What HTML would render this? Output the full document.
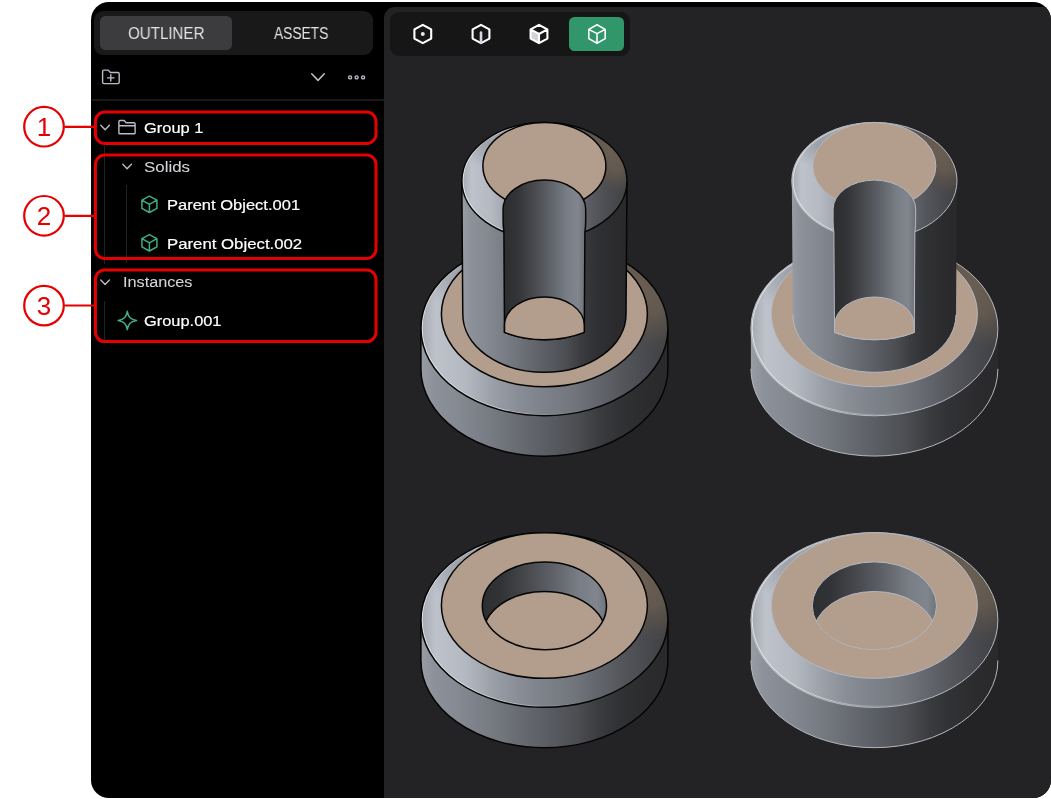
<!DOCTYPE html>
<html lang="en">
<head>
<meta charset="utf-8">
<title>Outliner</title>
<style>
html,body{margin:0;padding:0;background:#fff;}
body{width:1051px;height:799px;position:relative;overflow:hidden;font-family:"Liberation Sans",sans-serif;}
.app{position:absolute;left:91px;top:2px;width:959.5px;height:795.5px;background:#000;border-radius:18px;overflow:hidden;}
.view{position:absolute;left:293px;top:4.5px;right:0;bottom:0;background:#232325;border-top-left-radius:11px;}
.tbar{position:absolute;left:390px;top:12px;width:239.5px;height:43.5px;background:#161617;border-radius:9px;}
.tbtn{position:absolute;left:569px;top:17.2px;width:55.2px;height:33.6px;background:#32966b;border-radius:5.5px;}
.tabs{position:absolute;left:93.5px;top:11px;width:279.5px;height:44px;background:#19191a;border-radius:9px;}
.tabon{position:absolute;left:99.5px;top:16.4px;width:132.5px;height:33.6px;background:#3c3c3f;border-radius:5.5px;}
.tab{position:absolute;top:24px;height:20px;line-height:20px;font-size:17px;color:#e4e4e8;white-space:nowrap;transform-origin:0 50%;}
.sep{position:absolute;left:92px;top:99px;width:292px;height:1.5px;background:#19191a;}
.row{position:absolute;height:22px;line-height:22px;font-size:15.5px;color:#fff;white-space:nowrap;transform-origin:0 50%;}
.row{-webkit-text-stroke:0.2px #fff;}
.dim{color:#d4d4d8;-webkit-text-stroke:0.08px #d4d4d8;}
.row,.tab{will-change:transform;}
.guide{position:absolute;width:1px;background:#222224;}
svg.vp,svg.ov{position:absolute;left:0;top:0;}
.num{font-family:"Liberation Sans",sans-serif;font-size:26px;fill:#e60000;}
</style>
</head>
<body>
<div class="app"><div class="view"></div></div>
<div class="tbar"></div><div class="tbtn"></div>
<div class="tabs"></div><div class="tabon"></div>
<div class="tab" id="t1" style="left:128.2px;transform:scaleX(0.889);">OUTLINER</div>
<div class="tab" id="t2" style="left:274px;transform:scaleX(0.81);">ASSETS</div>
<div class="sep"></div>
<div class="guide" style="left:104px;top:146px;height:118px;"></div>
<div class="guide" style="left:126px;top:185px;height:78px;"></div>
<div class="guide" style="left:104px;top:301px;height:40px;"></div>
<div class="row" id="r1" style="left:143.9px;transform:scaleX(1.06);top:117px;">Group 1</div>
<div class="row dim" id="r2" style="left:144.0px;transform:scaleX(1.09);top:155.5px;">Solids</div>
<div class="row" id="r3" style="left:166.6px;transform:scaleX(1.065);top:194px;">Parent Object.001</div>
<div class="row" id="r4" style="left:166.6px;transform:scaleX(1.082);top:232.5px;">Parent Object.002</div>
<div class="row dim" id="r5" style="left:122.6px;transform:scaleX(1.047);top:271.4px;">Instances</div>
<div class="row" id="r6" style="left:143.9px;transform:scaleX(1.058);top:310px;">Group.001</div>
<svg class="vp" width="1051" height="799" viewBox="0 0 1051 799">
<defs>
<linearGradient id="g1" gradientUnits="userSpaceOnUse" x1="420.9" y1="0" x2="667.9" y2="0"><stop offset="0" stop-color="#989ca4"/><stop offset="0.05" stop-color="#8d9199"/><stop offset="0.15" stop-color="#858991"/><stop offset="0.26" stop-color="#797d85"/><stop offset="0.38" stop-color="#6a6e74"/><stop offset="0.5" stop-color="#5b5e64"/><stop offset="0.63" stop-color="#4c4e52"/><stop offset="0.72" stop-color="#3b3c3f"/><stop offset="0.8" stop-color="#313235"/><stop offset="0.9" stop-color="#2c2c2e"/><stop offset="1" stop-color="#29292b"/></linearGradient>
<linearGradient id="g2" gradientUnits="userSpaceOnUse" x1="420.9" y1="0" x2="667.9" y2="0"><stop offset="0" stop-color="#a4a8b0"/><stop offset="0.06" stop-color="#bec2ca"/><stop offset="0.18" stop-color="#b4b8c0"/><stop offset="0.3" stop-color="#999da5"/><stop offset="0.4" stop-color="#888c94"/><stop offset="0.5" stop-color="#7d8189"/><stop offset="0.62" stop-color="#72767c"/><stop offset="0.72" stop-color="#62656b"/><stop offset="0.82" stop-color="#53555a"/><stop offset="0.92" stop-color="#48494e"/><stop offset="1" stop-color="#3f4043"/></linearGradient>
<radialGradient id="g3" gradientUnits="userSpaceOnUse" cx="0" cy="0" r="1" gradientTransform="translate(467.83 274.26) rotate(0) scale(55.58 34.93)"><stop offset="0" stop-color="#80848c" stop-opacity="0.55"/><stop offset="1" stop-color="#80848c" stop-opacity="0"/></radialGradient>
<radialGradient id="g4" gradientUnits="userSpaceOnUse" cx="0" cy="0" r="1" gradientTransform="translate(643.2 288.23) rotate(-28) scale(46.93 69.86)"><stop offset="0" stop-color="#6a5e52" stop-opacity="1"/><stop offset="0.4" stop-color="#655a4f" stop-opacity="0.92"/><stop offset="0.7" stop-color="#5a524a" stop-opacity="0.55"/><stop offset="1" stop-color="#4a4744" stop-opacity="0"/></radialGradient>
<linearGradient id="g5" gradientUnits="userSpaceOnUse" x1="420.9" y1="0" x2="667.9" y2="0"><stop offset="0" stop-color="#ffffff" stop-opacity="0.75"/><stop offset="0.3" stop-color="#ffffff" stop-opacity="0.5"/><stop offset="0.55" stop-color="#ffffff" stop-opacity="0.12"/><stop offset="0.7" stop-color="#ffffff" stop-opacity="0"/></linearGradient>
<linearGradient id="g6" gradientUnits="userSpaceOnUse" x1="461.8" y1="0" x2="627" y2="0"><stop offset="0" stop-color="#989ca4"/><stop offset="0.05" stop-color="#8d9199"/><stop offset="0.15" stop-color="#858991"/><stop offset="0.26" stop-color="#797d85"/><stop offset="0.38" stop-color="#6a6e74"/><stop offset="0.5" stop-color="#5b5e64"/><stop offset="0.63" stop-color="#4c4e52"/><stop offset="0.72" stop-color="#3b3c3f"/><stop offset="0.8" stop-color="#313235"/><stop offset="0.9" stop-color="#2c2c2e"/><stop offset="1" stop-color="#29292b"/></linearGradient>
<linearGradient id="g7" gradientUnits="userSpaceOnUse" x1="461.8" y1="0" x2="627" y2="0"><stop offset="0" stop-color="#a4a8b0"/><stop offset="0.06" stop-color="#bec2ca"/><stop offset="0.18" stop-color="#b4b8c0"/><stop offset="0.3" stop-color="#999da5"/><stop offset="0.4" stop-color="#888c94"/><stop offset="0.5" stop-color="#7d8189"/><stop offset="0.62" stop-color="#72767c"/><stop offset="0.72" stop-color="#62656b"/><stop offset="0.82" stop-color="#53555a"/><stop offset="0.92" stop-color="#48494e"/><stop offset="1" stop-color="#3f4043"/></linearGradient>
<radialGradient id="g8" gradientUnits="userSpaceOnUse" cx="0" cy="0" r="1" gradientTransform="translate(493.19 144.61) rotate(0) scale(37.17 23.36)"><stop offset="0" stop-color="#80848c" stop-opacity="0.55"/><stop offset="1" stop-color="#80848c" stop-opacity="0"/></radialGradient>
<radialGradient id="g9" gradientUnits="userSpaceOnUse" cx="0" cy="0" r="1" gradientTransform="translate(610.48 153.95) rotate(-28) scale(31.39 46.73)"><stop offset="0" stop-color="#6a5e52" stop-opacity="1"/><stop offset="0.4" stop-color="#655a4f" stop-opacity="0.92"/><stop offset="0.7" stop-color="#5a524a" stop-opacity="0.55"/><stop offset="1" stop-color="#4a4744" stop-opacity="0"/></radialGradient>
<linearGradient id="g10" gradientUnits="userSpaceOnUse" x1="461.8" y1="0" x2="627" y2="0"><stop offset="0" stop-color="#ffffff" stop-opacity="0.75"/><stop offset="0.3" stop-color="#ffffff" stop-opacity="0.5"/><stop offset="0.55" stop-color="#ffffff" stop-opacity="0.12"/><stop offset="0.7" stop-color="#ffffff" stop-opacity="0"/></linearGradient>
<linearGradient id="g11" gradientUnits="userSpaceOnUse" x1="504.5" y1="0" x2="584.3" y2="0"><stop offset="0" stop-color="#2d2e30"/><stop offset="0.15" stop-color="#323336"/><stop offset="0.35" stop-color="#46484c"/><stop offset="0.55" stop-color="#5c5f65"/><stop offset="0.78" stop-color="#797d85"/><stop offset="0.92" stop-color="#81858d"/><stop offset="1" stop-color="#70747a"/></linearGradient>
<linearGradient id="g12" gradientUnits="userSpaceOnUse" x1="750.9" y1="0" x2="997.9" y2="0"><stop offset="0" stop-color="#989ca4"/><stop offset="0.05" stop-color="#8d9199"/><stop offset="0.15" stop-color="#858991"/><stop offset="0.26" stop-color="#797d85"/><stop offset="0.38" stop-color="#6a6e74"/><stop offset="0.5" stop-color="#5b5e64"/><stop offset="0.63" stop-color="#4c4e52"/><stop offset="0.72" stop-color="#3b3c3f"/><stop offset="0.8" stop-color="#313235"/><stop offset="0.9" stop-color="#2c2c2e"/><stop offset="1" stop-color="#29292b"/></linearGradient>
<linearGradient id="g13" gradientUnits="userSpaceOnUse" x1="750.9" y1="0" x2="997.9" y2="0"><stop offset="0" stop-color="#a4a8b0"/><stop offset="0.06" stop-color="#bec2ca"/><stop offset="0.18" stop-color="#b4b8c0"/><stop offset="0.3" stop-color="#999da5"/><stop offset="0.4" stop-color="#888c94"/><stop offset="0.5" stop-color="#7d8189"/><stop offset="0.62" stop-color="#72767c"/><stop offset="0.72" stop-color="#62656b"/><stop offset="0.82" stop-color="#53555a"/><stop offset="0.92" stop-color="#48494e"/><stop offset="1" stop-color="#3f4043"/></linearGradient>
<radialGradient id="g14" gradientUnits="userSpaceOnUse" cx="0" cy="0" r="1" gradientTransform="translate(797.83 274.26) rotate(0) scale(55.58 34.93)"><stop offset="0" stop-color="#80848c" stop-opacity="0.55"/><stop offset="1" stop-color="#80848c" stop-opacity="0"/></radialGradient>
<radialGradient id="g15" gradientUnits="userSpaceOnUse" cx="0" cy="0" r="1" gradientTransform="translate(973.2 288.23) rotate(-28) scale(46.93 69.86)"><stop offset="0" stop-color="#6a5e52" stop-opacity="1"/><stop offset="0.4" stop-color="#655a4f" stop-opacity="0.92"/><stop offset="0.7" stop-color="#5a524a" stop-opacity="0.55"/><stop offset="1" stop-color="#4a4744" stop-opacity="0"/></radialGradient>
<linearGradient id="g16" gradientUnits="userSpaceOnUse" x1="750.9" y1="0" x2="997.9" y2="0"><stop offset="0" stop-color="#ffffff" stop-opacity="0.75"/><stop offset="0.3" stop-color="#ffffff" stop-opacity="0.5"/><stop offset="0.55" stop-color="#ffffff" stop-opacity="0.12"/><stop offset="0.7" stop-color="#ffffff" stop-opacity="0"/></linearGradient>
<linearGradient id="g17" gradientUnits="userSpaceOnUse" x1="791.8" y1="0" x2="957" y2="0"><stop offset="0" stop-color="#989ca4"/><stop offset="0.05" stop-color="#8d9199"/><stop offset="0.15" stop-color="#858991"/><stop offset="0.26" stop-color="#797d85"/><stop offset="0.38" stop-color="#6a6e74"/><stop offset="0.5" stop-color="#5b5e64"/><stop offset="0.63" stop-color="#4c4e52"/><stop offset="0.72" stop-color="#3b3c3f"/><stop offset="0.8" stop-color="#313235"/><stop offset="0.9" stop-color="#2c2c2e"/><stop offset="1" stop-color="#29292b"/></linearGradient>
<linearGradient id="g18" gradientUnits="userSpaceOnUse" x1="791.8" y1="0" x2="957" y2="0"><stop offset="0" stop-color="#a4a8b0"/><stop offset="0.06" stop-color="#bec2ca"/><stop offset="0.18" stop-color="#b4b8c0"/><stop offset="0.3" stop-color="#999da5"/><stop offset="0.4" stop-color="#888c94"/><stop offset="0.5" stop-color="#7d8189"/><stop offset="0.62" stop-color="#72767c"/><stop offset="0.72" stop-color="#62656b"/><stop offset="0.82" stop-color="#53555a"/><stop offset="0.92" stop-color="#48494e"/><stop offset="1" stop-color="#3f4043"/></linearGradient>
<radialGradient id="g19" gradientUnits="userSpaceOnUse" cx="0" cy="0" r="1" gradientTransform="translate(823.19 144.61) rotate(0) scale(37.17 23.36)"><stop offset="0" stop-color="#80848c" stop-opacity="0.55"/><stop offset="1" stop-color="#80848c" stop-opacity="0"/></radialGradient>
<radialGradient id="g20" gradientUnits="userSpaceOnUse" cx="0" cy="0" r="1" gradientTransform="translate(940.48 153.95) rotate(-28) scale(31.39 46.73)"><stop offset="0" stop-color="#6a5e52" stop-opacity="1"/><stop offset="0.4" stop-color="#655a4f" stop-opacity="0.92"/><stop offset="0.7" stop-color="#5a524a" stop-opacity="0.55"/><stop offset="1" stop-color="#4a4744" stop-opacity="0"/></radialGradient>
<linearGradient id="g21" gradientUnits="userSpaceOnUse" x1="791.8" y1="0" x2="957" y2="0"><stop offset="0" stop-color="#ffffff" stop-opacity="0.75"/><stop offset="0.3" stop-color="#ffffff" stop-opacity="0.5"/><stop offset="0.55" stop-color="#ffffff" stop-opacity="0.12"/><stop offset="0.7" stop-color="#ffffff" stop-opacity="0"/></linearGradient>
<linearGradient id="g22" gradientUnits="userSpaceOnUse" x1="834.5" y1="0" x2="914.3" y2="0"><stop offset="0" stop-color="#2d2e30"/><stop offset="0.15" stop-color="#323336"/><stop offset="0.35" stop-color="#46484c"/><stop offset="0.55" stop-color="#5c5f65"/><stop offset="0.78" stop-color="#797d85"/><stop offset="0.92" stop-color="#81858d"/><stop offset="1" stop-color="#70747a"/></linearGradient>
<linearGradient id="g23" gradientUnits="userSpaceOnUse" x1="420.9" y1="0" x2="667.9" y2="0"><stop offset="0" stop-color="#989ca4"/><stop offset="0.05" stop-color="#8d9199"/><stop offset="0.15" stop-color="#858991"/><stop offset="0.26" stop-color="#797d85"/><stop offset="0.38" stop-color="#6a6e74"/><stop offset="0.5" stop-color="#5b5e64"/><stop offset="0.63" stop-color="#4c4e52"/><stop offset="0.72" stop-color="#3b3c3f"/><stop offset="0.8" stop-color="#313235"/><stop offset="0.9" stop-color="#2c2c2e"/><stop offset="1" stop-color="#29292b"/></linearGradient>
<linearGradient id="g24" gradientUnits="userSpaceOnUse" x1="420.9" y1="0" x2="667.9" y2="0"><stop offset="0" stop-color="#a4a8b0"/><stop offset="0.06" stop-color="#bec2ca"/><stop offset="0.18" stop-color="#b4b8c0"/><stop offset="0.3" stop-color="#999da5"/><stop offset="0.4" stop-color="#888c94"/><stop offset="0.5" stop-color="#7d8189"/><stop offset="0.62" stop-color="#72767c"/><stop offset="0.72" stop-color="#62656b"/><stop offset="0.82" stop-color="#53555a"/><stop offset="0.92" stop-color="#48494e"/><stop offset="1" stop-color="#3f4043"/></linearGradient>
<radialGradient id="g25" gradientUnits="userSpaceOnUse" cx="0" cy="0" r="1" gradientTransform="translate(467.83 565.86) rotate(0) scale(55.58 34.93)"><stop offset="0" stop-color="#80848c" stop-opacity="0.55"/><stop offset="1" stop-color="#80848c" stop-opacity="0"/></radialGradient>
<radialGradient id="g26" gradientUnits="userSpaceOnUse" cx="0" cy="0" r="1" gradientTransform="translate(643.2 579.83) rotate(-28) scale(46.93 69.86)"><stop offset="0" stop-color="#6a5e52" stop-opacity="1"/><stop offset="0.4" stop-color="#655a4f" stop-opacity="0.92"/><stop offset="0.7" stop-color="#5a524a" stop-opacity="0.55"/><stop offset="1" stop-color="#4a4744" stop-opacity="0"/></radialGradient>
<linearGradient id="g27" gradientUnits="userSpaceOnUse" x1="420.9" y1="0" x2="667.9" y2="0"><stop offset="0" stop-color="#ffffff" stop-opacity="0.75"/><stop offset="0.3" stop-color="#ffffff" stop-opacity="0.5"/><stop offset="0.55" stop-color="#ffffff" stop-opacity="0.12"/><stop offset="0.7" stop-color="#ffffff" stop-opacity="0"/></linearGradient>
<linearGradient id="g28" gradientUnits="userSpaceOnUse" x1="482.3" y1="0" x2="606.5" y2="0"><stop offset="0" stop-color="#2d2e30"/><stop offset="0.15" stop-color="#323336"/><stop offset="0.35" stop-color="#46484c"/><stop offset="0.55" stop-color="#5c5f65"/><stop offset="0.78" stop-color="#797d85"/><stop offset="0.92" stop-color="#81858d"/><stop offset="1" stop-color="#70747a"/></linearGradient>
<linearGradient id="g29" gradientUnits="userSpaceOnUse" x1="750.9" y1="0" x2="997.9" y2="0"><stop offset="0" stop-color="#989ca4"/><stop offset="0.05" stop-color="#8d9199"/><stop offset="0.15" stop-color="#858991"/><stop offset="0.26" stop-color="#797d85"/><stop offset="0.38" stop-color="#6a6e74"/><stop offset="0.5" stop-color="#5b5e64"/><stop offset="0.63" stop-color="#4c4e52"/><stop offset="0.72" stop-color="#3b3c3f"/><stop offset="0.8" stop-color="#313235"/><stop offset="0.9" stop-color="#2c2c2e"/><stop offset="1" stop-color="#29292b"/></linearGradient>
<linearGradient id="g30" gradientUnits="userSpaceOnUse" x1="750.9" y1="0" x2="997.9" y2="0"><stop offset="0" stop-color="#a4a8b0"/><stop offset="0.06" stop-color="#bec2ca"/><stop offset="0.18" stop-color="#b4b8c0"/><stop offset="0.3" stop-color="#999da5"/><stop offset="0.4" stop-color="#888c94"/><stop offset="0.5" stop-color="#7d8189"/><stop offset="0.62" stop-color="#72767c"/><stop offset="0.72" stop-color="#62656b"/><stop offset="0.82" stop-color="#53555a"/><stop offset="0.92" stop-color="#48494e"/><stop offset="1" stop-color="#3f4043"/></linearGradient>
<radialGradient id="g31" gradientUnits="userSpaceOnUse" cx="0" cy="0" r="1" gradientTransform="translate(797.83 565.86) rotate(0) scale(55.58 34.93)"><stop offset="0" stop-color="#80848c" stop-opacity="0.55"/><stop offset="1" stop-color="#80848c" stop-opacity="0"/></radialGradient>
<radialGradient id="g32" gradientUnits="userSpaceOnUse" cx="0" cy="0" r="1" gradientTransform="translate(973.2 579.83) rotate(-28) scale(46.93 69.86)"><stop offset="0" stop-color="#6a5e52" stop-opacity="1"/><stop offset="0.4" stop-color="#655a4f" stop-opacity="0.92"/><stop offset="0.7" stop-color="#5a524a" stop-opacity="0.55"/><stop offset="1" stop-color="#4a4744" stop-opacity="0"/></radialGradient>
<linearGradient id="g33" gradientUnits="userSpaceOnUse" x1="750.9" y1="0" x2="997.9" y2="0"><stop offset="0" stop-color="#ffffff" stop-opacity="0.75"/><stop offset="0.3" stop-color="#ffffff" stop-opacity="0.5"/><stop offset="0.55" stop-color="#ffffff" stop-opacity="0.12"/><stop offset="0.7" stop-color="#ffffff" stop-opacity="0"/></linearGradient>
<linearGradient id="g34" gradientUnits="userSpaceOnUse" x1="812.3" y1="0" x2="936.5" y2="0"><stop offset="0" stop-color="#2d2e30"/><stop offset="0.15" stop-color="#323336"/><stop offset="0.35" stop-color="#46484c"/><stop offset="0.55" stop-color="#5c5f65"/><stop offset="0.78" stop-color="#797d85"/><stop offset="0.92" stop-color="#81858d"/><stop offset="1" stop-color="#70747a"/></linearGradient>
</defs>
<path d="M420.9,328.4 L420.9,368.8 A123.5,87.33 0 0 0 667.9,368.8 L667.9,328.4 A123.5,87.33 0 0 0 420.9,328.4 Z" fill="url(#g1)"/>
<path d="M420.9,328.4 L420.9,368.8 A123.5,87.33 0 0 0 667.9,368.8 L667.9,328.4" fill="none" stroke="#050505" stroke-width="1.5"/>
<path d="M420.9,328.4 A123.5,87.33 0 1 1 667.9,328.4 A123.5,87.33 0 1 1 420.9,328.4 Z" fill="url(#g2)"/>
<path d="M420.9,328.4 A123.5,87.33 0 1 1 667.9,328.4 A123.5,87.33 0 1 1 420.9,328.4 Z" fill="url(#g3)"/>
<path d="M420.9,328.4 A123.5,87.33 0 1 1 667.9,328.4 A123.5,87.33 0 1 1 420.9,328.4 Z" fill="url(#g4)"/>
<path d="M422.15,328.2 A122.25,86.44 0 1 1 666.65,328.2 A122.25,86.44 0 1 1 422.15,328.2 Z" fill="none" stroke="url(#g5)" stroke-width="0.9"/>
<path d="M420.9,328.4 A123.5,87.33 0 1 1 667.9,328.4 A123.5,87.33 0 1 1 420.9,328.4 Z" fill="none" stroke="#050505" stroke-width="1.5"/>
<path d="M441.4,313.9 A103,72.83 0 1 1 647.4,313.9 A103,72.83 0 1 1 441.4,313.9 Z" fill="#b39d8d" stroke="#050505" stroke-width="1.5"/>
<path d="M461.8,180.82 L462.8,314.6 A81.6,57.7 0 0 0 626,314.6 L627,180.82 A82.6,58.41 0 0 0 461.8,180.82 Z" fill="url(#g6)"/>
<path d="M461.8,180.82 L462.8,314.6 A81.6,57.7 0 0 0 626,314.6 L627,180.82" fill="none" stroke="#050505" stroke-width="1.5"/>
<path d="M461.8,180.82 A82.6,58.41 0 1 1 627,180.82 A82.6,58.41 0 1 1 461.8,180.82 Z" fill="url(#g7)"/>
<path d="M461.8,180.82 A82.6,58.41 0 1 1 627,180.82 A82.6,58.41 0 1 1 461.8,180.82 Z" fill="url(#g8)"/>
<path d="M461.8,180.82 A82.6,58.41 0 1 1 627,180.82 A82.6,58.41 0 1 1 461.8,180.82 Z" fill="url(#g9)"/>
<path d="M463.05,180.62 A81.35,57.52 0 1 1 625.75,180.62 A81.35,57.52 0 1 1 463.05,180.62 Z" fill="none" stroke="url(#g10)" stroke-width="0.9"/>
<path d="M461.8,180.82 A82.6,58.41 0 1 1 627,180.82 A82.6,58.41 0 1 1 461.8,180.82 Z" fill="none" stroke="#050505" stroke-width="1.5"/>
<path d="M482.9,165.9 A61.5,43.49 0 1 1 605.9,165.9 A61.5,43.49 0 1 1 482.9,165.9 Z" fill="#b39d8d" stroke="#050505" stroke-width="1.5"/>
<path d="M504.5,332.42 L503.9,232 C503.3,228 503.1,223.5 503.1,219.5 L503.1,209.2 A41.3,29.1 0 0 1 585.7,209.2 L585.7,219.5 C585.7,223.5 585.5,228 584.9,232 L584.3,332.42 A81.9,57.91 0 0 1 504.5,332.42 Z" fill="url(#g11)" stroke="#050505" stroke-width="1.5" stroke-linejoin="round"/>
<path d="M504.5,325.2 A39.9,28.21 0 0 1 584.3,325.2 L584.3,332.42 A81.9,57.91 0 0 1 504.5,332.42 Z" fill="#b39d8d" stroke="#050505" stroke-width="1.5" stroke-linejoin="round"/>
<path d="M750.9,328.4 L750.9,368.8 A123.5,87.33 0 0 0 997.9,368.8 L997.9,328.4 A123.5,87.33 0 0 0 750.9,328.4 Z" fill="url(#g12)"/>
<path d="M750.9,368.8 A123.5,87.33 0 0 0 997.9,368.8" fill="none" stroke="#b4b8bf" stroke-width="1.0"/>
<path d="M750.9,328.4 A123.5,87.33 0 1 1 997.9,328.4 A123.5,87.33 0 1 1 750.9,328.4 Z" fill="url(#g13)"/>
<path d="M750.9,328.4 A123.5,87.33 0 1 1 997.9,328.4 A123.5,87.33 0 1 1 750.9,328.4 Z" fill="url(#g14)"/>
<path d="M750.9,328.4 A123.5,87.33 0 1 1 997.9,328.4 A123.5,87.33 0 1 1 750.9,328.4 Z" fill="url(#g15)"/>
<path d="M752.15,328.2 A122.25,86.44 0 1 1 996.65,328.2 A122.25,86.44 0 1 1 752.15,328.2 Z" fill="none" stroke="url(#g16)" stroke-width="0.9"/>
<path d="M750.9,328.4 A123.5,87.33 0 1 1 997.9,328.4 A123.5,87.33 0 1 1 750.9,328.4 Z" fill="none" stroke="#b4b8bf" stroke-width="1.0"/>
<path d="M771.4,313.9 A103,72.83 0 1 1 977.4,313.9 A103,72.83 0 1 1 771.4,313.9 Z" fill="#b39d8d" stroke="#b4b8bf" stroke-width="1.0"/>
<path d="M791.8,180.82 L792.8,314.6 A81.6,57.7 0 0 0 956,314.6 L957,180.82 A82.6,58.41 0 0 0 791.8,180.82 Z" fill="url(#g17)"/>
<path d="M792.8,314.6 A81.6,57.7 0 0 0 956,314.6" fill="none" stroke="#b4b8bf" stroke-width="1.0"/>
<path d="M791.8,180.82 A82.6,58.41 0 1 1 957,180.82 A82.6,58.41 0 1 1 791.8,180.82 Z" fill="url(#g18)"/>
<path d="M791.8,180.82 A82.6,58.41 0 1 1 957,180.82 A82.6,58.41 0 1 1 791.8,180.82 Z" fill="url(#g19)"/>
<path d="M791.8,180.82 A82.6,58.41 0 1 1 957,180.82 A82.6,58.41 0 1 1 791.8,180.82 Z" fill="url(#g20)"/>
<path d="M793.05,180.62 A81.35,57.52 0 1 1 955.75,180.62 A81.35,57.52 0 1 1 793.05,180.62 Z" fill="none" stroke="url(#g21)" stroke-width="0.9"/>
<path d="M791.8,180.82 A82.6,58.41 0 1 1 957,180.82 A82.6,58.41 0 1 1 791.8,180.82 Z" fill="none" stroke="#b4b8bf" stroke-width="1.0"/>
<path d="M812.9,165.9 A61.5,43.49 0 1 1 935.9,165.9 A61.5,43.49 0 1 1 812.9,165.9 Z" fill="#b39d8d" stroke="#b4b8bf" stroke-width="1.0"/>
<path d="M834.5,332.42 L833.9,232 C833.3,228 833.1,223.5 833.1,219.5 L833.1,209.2 A41.3,29.1 0 0 1 915.7,209.2 L915.7,219.5 C915.7,223.5 915.5,228 914.9,232 L914.3,332.42 A81.9,57.91 0 0 1 834.5,332.42 Z" fill="url(#g22)" stroke="#b4b8bf" stroke-width="1.0" stroke-linejoin="round"/>
<path d="M834.5,325.2 A39.9,28.21 0 0 1 914.3,325.2 L914.3,332.42 A81.9,57.91 0 0 1 834.5,332.42 Z" fill="#b39d8d" stroke="#b4b8bf" stroke-width="1.0" stroke-linejoin="round"/>
<path d="M420.9,620 L420.9,660.4 A123.5,87.33 0 0 0 667.9,660.4 L667.9,620 A123.5,87.33 0 0 0 420.9,620 Z" fill="url(#g23)"/>
<path d="M420.9,620 L420.9,660.4 A123.5,87.33 0 0 0 667.9,660.4 L667.9,620" fill="none" stroke="#050505" stroke-width="1.5"/>
<path d="M420.9,620 A123.5,87.33 0 1 1 667.9,620 A123.5,87.33 0 1 1 420.9,620 Z" fill="url(#g24)"/>
<path d="M420.9,620 A123.5,87.33 0 1 1 667.9,620 A123.5,87.33 0 1 1 420.9,620 Z" fill="url(#g25)"/>
<path d="M420.9,620 A123.5,87.33 0 1 1 667.9,620 A123.5,87.33 0 1 1 420.9,620 Z" fill="url(#g26)"/>
<path d="M422.15,619.8 A122.25,86.44 0 1 1 666.65,619.8 A122.25,86.44 0 1 1 422.15,619.8 Z" fill="none" stroke="url(#g27)" stroke-width="0.9"/>
<path d="M420.9,620 A123.5,87.33 0 1 1 667.9,620 A123.5,87.33 0 1 1 420.9,620 Z" fill="none" stroke="#050505" stroke-width="1.5"/>
<path d="M441.4,605.5 A103,72.83 0 1 1 647.4,605.5 A103,72.83 0 1 1 441.4,605.5 Z" fill="#b39d8d" stroke="#050505" stroke-width="1.5"/>
<clipPath id="clipHC"><path d="M482.3,605.8 A62.1,43.91 0 1 1 606.5,605.8 A62.1,43.91 0 1 1 482.3,605.8 Z"/></clipPath>
<path d="M482.3,605.8 A62.1,43.91 0 1 1 606.5,605.8 A62.1,43.91 0 1 1 482.3,605.8 Z" fill="url(#g28)"/>
<g clip-path="url(#clipHC)"><path d="M483.1,634.8 A61.3,43.35 0 1 1 605.7,634.8 A61.3,43.35 0 1 1 483.1,634.8 Z" fill="#b39d8d" stroke="#050505" stroke-width="1.5"/></g>
<path d="M482.3,605.8 A62.1,43.91 0 1 1 606.5,605.8 A62.1,43.91 0 1 1 482.3,605.8 Z" fill="none" stroke="#050505" stroke-width="1.5"/>
<path d="M750.9,620 L750.9,660.4 A123.5,87.33 0 0 0 997.9,660.4 L997.9,620 A123.5,87.33 0 0 0 750.9,620 Z" fill="url(#g29)"/>
<path d="M750.9,660.4 A123.5,87.33 0 0 0 997.9,660.4" fill="none" stroke="#b4b8bf" stroke-width="1.0"/>
<path d="M750.9,620 A123.5,87.33 0 1 1 997.9,620 A123.5,87.33 0 1 1 750.9,620 Z" fill="url(#g30)"/>
<path d="M750.9,620 A123.5,87.33 0 1 1 997.9,620 A123.5,87.33 0 1 1 750.9,620 Z" fill="url(#g31)"/>
<path d="M750.9,620 A123.5,87.33 0 1 1 997.9,620 A123.5,87.33 0 1 1 750.9,620 Z" fill="url(#g32)"/>
<path d="M752.15,619.8 A122.25,86.44 0 1 1 996.65,619.8 A122.25,86.44 0 1 1 752.15,619.8 Z" fill="none" stroke="url(#g33)" stroke-width="0.9"/>
<path d="M750.9,620 A123.5,87.33 0 1 1 997.9,620 A123.5,87.33 0 1 1 750.9,620 Z" fill="none" stroke="#b4b8bf" stroke-width="1.0"/>
<path d="M771.4,605.5 A103,72.83 0 1 1 977.4,605.5 A103,72.83 0 1 1 771.4,605.5 Z" fill="#b39d8d" stroke="#b4b8bf" stroke-width="1.0"/>
<clipPath id="clipHD"><path d="M812.3,605.8 A62.1,43.91 0 1 1 936.5,605.8 A62.1,43.91 0 1 1 812.3,605.8 Z"/></clipPath>
<path d="M812.3,605.8 A62.1,43.91 0 1 1 936.5,605.8 A62.1,43.91 0 1 1 812.3,605.8 Z" fill="url(#g34)"/>
<g clip-path="url(#clipHD)"><path d="M813.1,634.8 A61.3,43.35 0 1 1 935.7,634.8 A61.3,43.35 0 1 1 813.1,634.8 Z" fill="#b39d8d" stroke="#b4b8bf" stroke-width="1.0"/></g>
<path d="M812.3,605.8 A62.1,43.91 0 1 1 936.5,605.8 A62.1,43.91 0 1 1 812.3,605.8 Z" fill="none" stroke="#b4b8bf" stroke-width="1.0"/>
</svg>
<svg class="ov" width="1051" height="799" viewBox="0 0 1051 799">
<!-- callouts -->
<g fill="none" stroke="#e60000">
<rect x="95.4" y="112" width="280.6" height="31.5" rx="9.5" stroke-width="3"/>
<rect x="95.4" y="155" width="280.6" height="103.5" rx="9.5" stroke-width="3"/>
<rect x="95.4" y="270" width="280.6" height="71.6" rx="9.5" stroke-width="3"/>
<g stroke-width="2.2">
<circle cx="44" cy="126.7" r="19.8"/><circle cx="44" cy="215.8" r="19.8"/><circle cx="44" cy="305.6" r="19.8"/>
<path d="M64.5,126.8H94.5M64.5,215.8H94.5M64.5,305.5H94.5"/>
</g></g>
<text class="num" x="44" y="136.3" text-anchor="middle">1</text>
<text class="num" x="44" y="225.3" text-anchor="middle">2</text>
<text class="num" x="44" y="315.1" text-anchor="middle">3</text>
<!-- sidebar icons -->
<g fill="none" stroke="#b9bcc6" stroke-width="1.4" stroke-linecap="round" stroke-linejoin="round">
<path d="M102.6,82.2V71.5a1.4,1.4 0 0 1 1.4,-1.4h4.2l2.2,2.4h7.4a1.4,1.4 0 0 1 1.4,1.4v8.3a1.4,1.4 0 0 1 -1.4,1.4H104a1.4,1.4 0 0 1 -1.4,-1.4Z"/>
<path d="M107.6,77.9h6.4M110.8,74.7v6.4"/>
<path d="M311.7,73.8L318,80.4L324.3,73.8" stroke-width="1.6"/>
<circle cx="350.1" cy="77.4" r="1.5"/><circle cx="356.6" cy="77.4" r="1.5"/><circle cx="363.1" cy="77.4" r="1.5"/>
<path d="M100.8,125.2L105.1,129.7L109.4,125.2"/>
<path d="M122.8,164.3L127.1,168.8L131.4,164.3"/>
<path d="M100.8,279.9L105.1,284.4L109.4,279.9"/>
<path d="M118.9,132.9V121.5a1,1 0 0 1 1,-1h4.3l1.9,2.2h8a1,1 0 0 1 1,1v9.2a0.8,0.8 0 0 1 -0.8,0.8H119.7a0.8,0.8 0 0 1 -0.8,-0.8ZM118.9,125.7H135.1"/>
</g>
<g fill="none" stroke="#3fae82" stroke-width="1.5" stroke-linejoin="round" stroke-linecap="round">
<path id="cube" d="M149.4,196.1L156.9,200.2V208.4L149.4,212.5L141.9,208.4V200.2ZM141.9,200.2L149.4,204.3L156.9,200.2M149.4,204.3V212.5"/>
<path d="M149.4,234.6L156.9,238.7V246.9L149.4,251L141.9,246.9V238.7ZM141.9,238.7L149.4,242.8L156.9,238.7M149.4,242.8V251"/>
<path d="M127.3,311.3C128.4,317.3 130.5,319.4 136.5,320.5C130.5,321.6 128.4,323.7 127.3,329.7C126.2,323.7 124.1,321.6 118.1,320.5C124.1,319.4 126.2,317.3 127.3,311.3Z"/>
</g>
<!-- toolbar icons -->
<g fill="none" stroke="#fff" stroke-width="2.1" stroke-linejoin="round">
<path d="M422.8,24.8L431.2,29.4V38.6L422.8,43.2L414.4,38.6V29.4Z"/>
<circle cx="422.8" cy="34.1" r="2" fill="#e8e8ee" stroke="none"/>
<path d="M481,24.8L489.4,29.4V38.6L481,43.2L472.6,38.6V29.4Z"/>
<path d="M481,32.5V42.5" stroke="#d6d8e0" stroke-width="2.6" stroke-linecap="round"/>
<path d="M530.6,29.4L539,34V43.2L530.6,38.6Z" fill="#d0d3da" stroke="none"/>
<path d="M539,24.8L547.4,29.4V38.6L539,43.2L530.6,38.6V29.4ZM530.6,29.4L539,34L547.4,29.4M539,34V43.2"/>
<path d="M597,24.8L605.2,29.4V38.6L597,43.2L588.8,38.6V29.4ZM588.8,29.4L597,33.6L605.2,29.4M597,33.6V43.2" stroke-width="1.6"/>
</g>
</svg>
</body>
</html>
